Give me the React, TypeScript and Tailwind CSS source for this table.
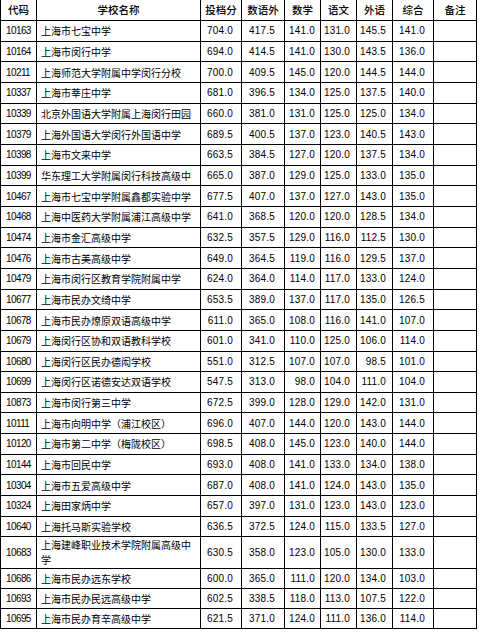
const rows: [string, string, string, string, string, string, string, string][] = [
  ["10163", "上海市七宝中学", "704.0", "417.5", "141.0", "131.0", "145.5", "141.0"],
  ["10164", "上海市闵行中学", "694.0", "414.5", "141.0", "130.0", "143.5", "136.0"],
  ["10211", "上海师范大学附属中学闵行分校", "700.0", "409.5", "145.0", "120.0", "144.5", "144.0"],
  ["10337", "上海市莘庄中学", "681.0", "396.5", "134.0", "125.0", "137.5", "140.0"],
  ["10339", "北京外国语大学附属上海闵行田园", "660.0", "381.0", "131.0", "125.0", "125.0", "134.0"],
  ["10379", "上海外国语大学闵行外国语中学", "689.5", "400.5", "137.0", "123.0", "140.5", "143.0"],
  ["10398", "上海市文来中学", "663.5", "384.5", "127.0", "120.0", "137.5", "134.0"],
  ["10399", "华东理工大学附属闵行科技高级中", "665.0", "387.0", "129.0", "125.0", "133.0", "135.0"],
  ["10467", "上海市七宝中学附属鑫都实验中学", "677.5", "407.0", "137.0", "127.0", "143.0", "135.0"],
  ["10468", "上海中医药大学附属浦江高级中学", "641.0", "368.5", "120.0", "120.0", "128.5", "134.0"],
  ["10474", "上海市金汇高级中学", "632.5", "357.5", "129.0", "116.0", "112.5", "130.0"],
  ["10476", "上海市古美高级中学", "649.0", "364.5", "119.0", "116.0", "129.5", "137.0"],
  ["10479", "上海市闵行区教育学院附属中学", "624.0", "364.0", "114.0", "117.0", "133.0", "124.0"],
  ["10677", "上海市民办文绮中学", "653.5", "389.0", "137.0", "117.0", "135.0", "126.5"],
  ["10678", "上海市民办燎原双语高级中学", "611.0", "365.0", "108.0", "116.0", "141.0", "107.0"],
  ["10679", "上海闵行区协和双语教科学校", "601.0", "341.0", "110.0", "125.0", "106.0", "114.0"],
  ["10680", "上海闵行区民办德闳学校", "551.0", "312.5", "107.0", "107.0", "98.5", "101.0"],
  ["10699", "上海闵行区诺德安达双语学校", "547.5", "313.0", "98.0", "104.0", "111.0", "104.0"],
  ["10873", "上海市闵行第三中学", "672.5", "399.0", "128.0", "129.0", "142.0", "131.0"],
  ["10111", "上海市向明中学（浦江校区）", "696.0", "407.0", "144.0", "120.0", "143.0", "144.0"],
  ["10120", "上海市第二中学（梅陇校区）", "698.5", "408.0", "145.0", "123.0", "140.0", "144.0"],
  ["10144", "上海市回民中学", "693.0", "408.0", "141.0", "133.0", "134.0", "138.0"],
  ["10304", "上海市五爱高级中学", "687.0", "408.0", "141.0", "124.0", "143.0", "135.0"],
  ["10324", "上海田家炳中学", "657.0", "397.0", "131.0", "123.0", "143.0", "123.0"],
  ["10640", "上海托马斯实验学校", "636.5", "372.5", "124.0", "115.0", "133.5", "127.0"],
  ["10683", "上海建峰职业技术学院附属高级中学", "630.5", "358.0", "123.0", "105.0", "130.0", "133.0"],
  ["10686", "上海市民办远东学校", "600.0", "365.0", "111.0", "120.0", "134.0", "103.0"],
  ["10693", "上海市民办民远高级中学", "602.5", "338.5", "118.0", "113.0", "107.5", "122.0"],
  ["10695", "上海市民办育辛高级中学", "621.5", "371.0", "124.0", "111.0", "136.0", "114.0"],
]

const cjk = "font-['Noto_Sans_CJK_SC',sans-serif]"
const num = "font-['Liberation_Sans',Arial,sans-serif]"

// score columns: width + right padding so numbers line up like the sheet
const scoreCols = [
  "w-[41px] pr-[8px]",
  "w-[43px] pr-[9px]",
  "w-[36px] pr-[5px]",
  "w-[36px] pr-[6px]",
  "w-[36px] pr-[6px]",
  "w-[41px] pr-[8px]",
]

const headers = ["投档分", "数语外", "数学", "语文", "外语", "综合"]
const headerWidths = ["w-[41px]", "w-[43px]", "w-[36px]", "w-[36px]", "w-[36px]", "w-[41px]"]

function rowHeight(i: number) {
  if (i === 25) return "h-[32px]"
  if (i >= 24) return "h-[20px]"
  return "h-[20.67px]"
}

export default function App() {
  return (
    <div className="w-[479px] h-[636px] bg-white text-black overflow-hidden">
      <div className="w-[477px]">
        {/* header */}
        <div className={`flex h-[21px] border-b border-black text-[10.5px] font-medium ${cjk}`}>
          <div className="w-[37px] border-x border-black flex items-center justify-center">代码</div>
          <div className="w-[164px] border-r border-black flex items-center justify-center">学校名称</div>
          {headers.map((h, i) => (
            <div key={h} className={`${headerWidths[i]} border-r border-black flex items-center justify-center`}>
              {h}
            </div>
          ))}
          <div className="w-[43px] border-r border-black flex items-center justify-center">备注</div>
        </div>

        {rows.map((r, i) => (
          <div key={r[0]} className={`flex ${rowHeight(i)} border-b border-black box-border`}>
            <div className={`w-[37px] border-x border-black flex items-center pl-[5px] text-[10px] tracking-[-0.6px] ${num}`}>
              {r[0]}
            </div>
            <div className={`w-[164px] border-r border-black flex items-center pl-[4px] pr-[3px] text-[10px] leading-[15px] ${cjk}`}>
              <span>{r[1]}</span>
            </div>
            {r.slice(2).map((v, j) => (
              <div
                key={j}
                className={`${scoreCols[j]} border-r border-black flex items-center justify-end text-[10px] tracking-[0.2px] ${num}`}
              >
                {v}
              </div>
            ))}
            <div className="w-[43px] border-r border-black" />
          </div>
        ))}
      </div>
    </div>
  )
}
